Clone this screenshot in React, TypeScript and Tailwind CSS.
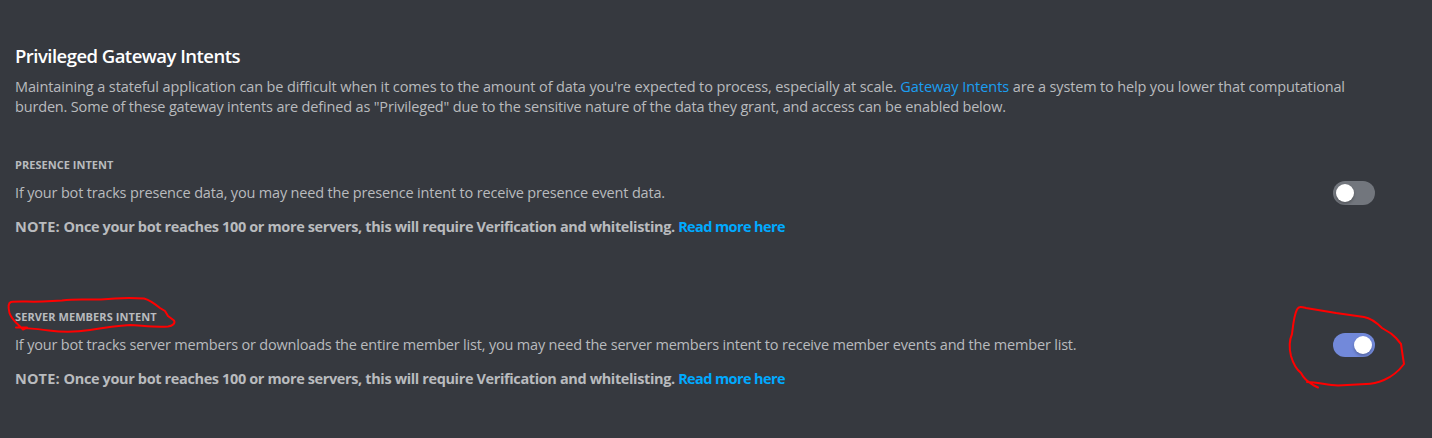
type IntentProps = {
  title: string;
  titleClass: string;
  text: string;
  textClass: string;
  on: boolean;
};

function Toggle({ on }: { on: boolean }) {
  return (
    <button
      role="switch"
      aria-checked={on}
      className={`flex h-6 w-[42px] shrink-0 items-center rounded-full p-[3px] ${on ? "justify-end bg-[#7289da]" : "justify-start bg-[#72767d]"}`}
    >
      <span className="size-[18px] rounded-full bg-white shadow-[0_2px_3px_rgba(0,0,0,0.25)]" />
    </button>
  );
}

function Intent({ title, titleClass, text, textClass, on }: IntentProps) {
  return (
    <section className="flex h-[79px] flex-col">
      <h3 className={`text-[11px] leading-4 font-bold text-[#b9bbbe] uppercase ${titleClass}`}>{title}</h3>
      <div className="mt-2 flex justify-between">
        <div className="pt-0.5 whitespace-nowrap">
          <p className={textClass}>{text}</p>
          <p className="mt-3.5 font-bold tracking-[-0.37px]">
            <span className="tracking-[0.14px]">NOTE: </span>
            Once your bot reaches 100 or more servers, this will require Verification and whitelisting.{" "}
            <a href="#" className="tracking-[-0.6px] text-[#00aaff]">Read more here</a>
          </p>
        </div>
        <Toggle on={on} />
      </div>
    </section>
  );
}

export default function App() {
  return (
    <main className="relative flex h-[438px] w-[1432px] flex-col overflow-hidden bg-[#36393f] pt-11 pr-[57px] pl-[15px] font-['Open_Sans',sans-serif] text-[14.5px] leading-5 text-[#b9bbbe]">
      <h2 className="text-[18.5px] leading-6 font-semibold tracking-[-0.53px] text-white">Privileged Gateway Intents</h2>
      <div className="mt-[9px] whitespace-nowrap">
        <p className="tracking-[-0.115px]">
          Maintaining a stateful application can be difficult when it comes to the amount of data you're expected to process, especially at scale.{" "}
          <a href="#" className="tracking-[-0.04px] text-[#1b9ff1]">Gateway Intents</a>
          <span className="tracking-[-0.155px]"> are a system to help you lower that computational</span>
        </p>
        <p className="tracking-[-0.167px]">
          burden. Some of these gateway intents are defined as "Privileged" due to the sensitive nature of the data they grant, and access can be enabled below.
        </p>
      </div>
      <div className="mt-10 flex flex-col gap-[73px]">
        <Intent
          title="Presence Intent"
          titleClass="tracking-[0.03px]"
          text="If your bot tracks presence data, you may need the presence intent to receive presence event data."
          textClass="tracking-[-0.17px]"
          on={false}
        />
        <Intent
          title="Server Members Intent"
          titleClass="tracking-[0.08px]"
          text="If your bot tracks server members or downloads the entire member list, you may need the server members intent to receive member events and the member list."
          textClass="tracking-[-0.188px]"
          on
        />
      </div>
      <svg
        className="pointer-events-none absolute top-0 left-0"
        width="1432"
        height="438"
        viewBox="0 0 1432 438"
        fill="none"
        stroke="#ff0000"
        strokeWidth="2"
        strokeLinecap="round"
        strokeLinejoin="round"
      >
        <path d="M16 327.500L27 327.500L23 329.500L19 325.500C14 321 11 318 9.500 313C8 307 8 303 11 302C17 301 30 302 43 301.500L62 300.500C78 298.500 88 300 101 299.500C115 298 131 297.500 144 298.500C150 300 155 304 160 308L165 311L168 316L174 320.500C175.500 323 173 326 168 326.500C155 327.500 142 325.500 130 325C115 326 102 328 90 330C77 332 61 332 49 330.500C38 329 30 328.500 23 328" />
        <path d="M1318 387.500L1313 385C1308 382 1303 377 1301 373C1296 369 1293 363 1291 356C1289 348 1289 341 1292 334C1293 326 1294 315 1297 309.500C1299 306 1302 307 1306 308L1336 313L1364 317C1370 318 1376 322 1382 328L1391 333.500L1396 338L1401 344C1402 351 1403 358 1404 364C1398 372 1391 377 1384 380C1377 383 1373 384 1366 384L1338 385.500C1327 385 1317 382 1307 382" />
      </svg>
    </main>
  );
}
